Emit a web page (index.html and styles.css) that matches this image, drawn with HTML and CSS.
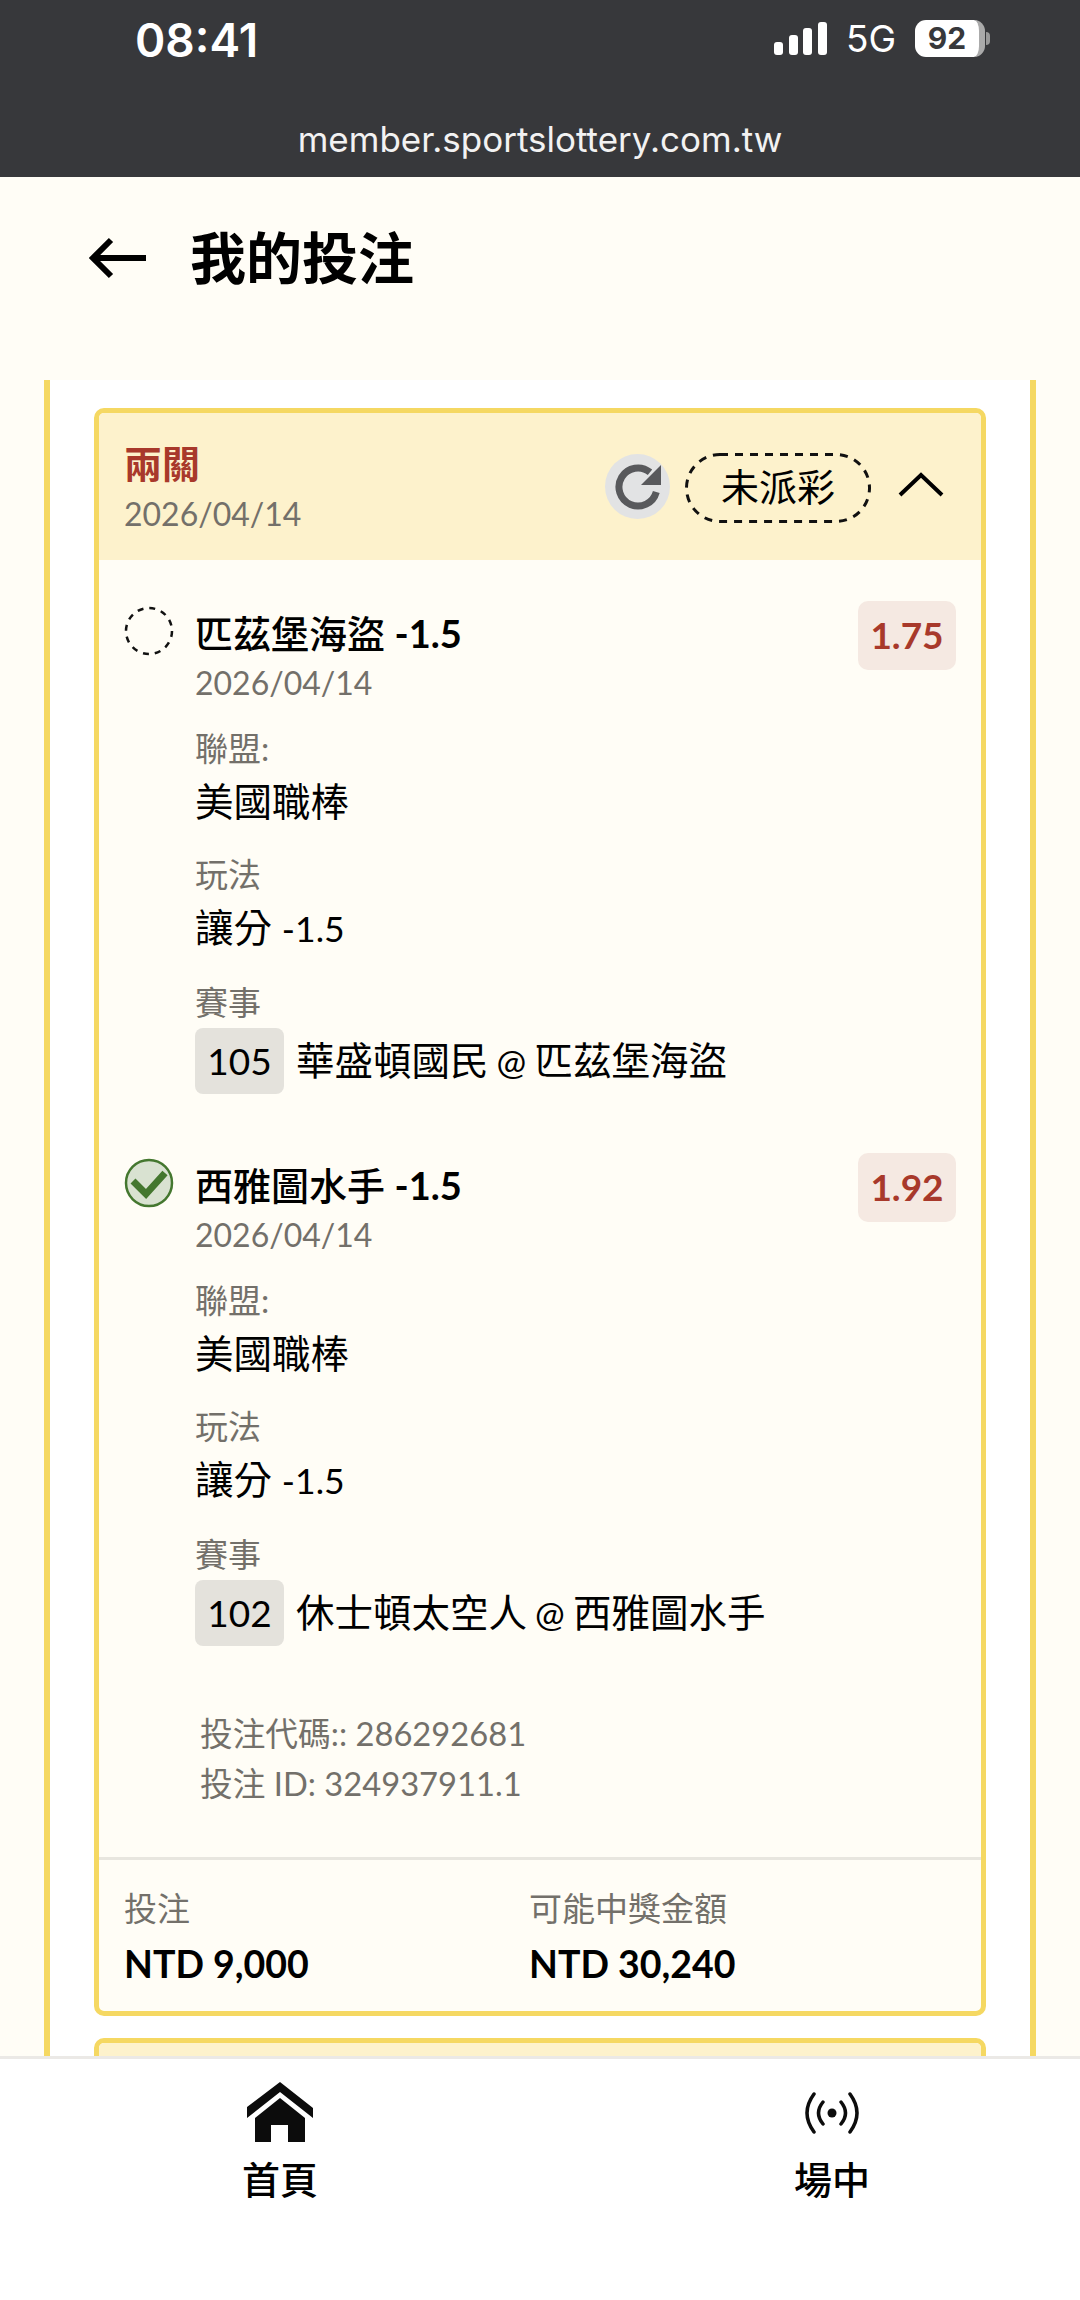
FILE: index.html
```html
<!DOCTYPE html>
<html lang="zh-Hant">
<head>
<meta charset="utf-8">
<title>我的投注</title>
<link rel="stylesheet" href="styles.css">
</head>
<body>
<div class="page">
  <div class="browser">
    <div class="status">
      <span class="time">08:41</span>
      <div class="status-right">
        <svg class="signal" width="53" height="33" viewBox="0 0 53 33"><rect x="0" y="20" width="9" height="13" rx="3"/><rect x="15" y="13" width="9" height="20" rx="3"/><rect x="29" y="6" width="9" height="27" rx="3"/><rect x="44" y="0" width="9" height="33" rx="3"/></svg>
        <span class="net">5G</span>
        <div class="battery"><span class="batt-num">92</span></div>
        <span class="batt-cap"></span>
      </div>
    </div>
    <div class="url">member.sportslottery.com.tw</div>
  </div>

  <header class="title-bar">
    <svg class="back" width="60" height="44" viewBox="0 0 60 44"><path d="M58 22H5M23 4 5 22l18 18" fill="none" stroke="#000" stroke-width="6"/></svg>
    <h1 class="title">我的投注</h1>
  </header>

  <main class="panel">
    <section class="card">
      <div class="card-head">
        <div>
          <div class="kind">兩關</div>
          <div class="head-date">2026/04/14</div>
        </div>
        <div class="head-actions">
          <span class="refresh">
            <svg width="48" height="48" viewBox="0 0 48 48"><path d="M36 9.3A19 19 0 1 0 42.3 29" fill="none" stroke="#58595c" stroke-width="7"/><path d="M47 2V22H27z" fill="#58595c"/></svg>
          </span>
          <span class="state">未派彩<svg class="state-line" width="186" height="70" viewBox="0 0 186 70"><rect x="1.5" y="1.5" width="183" height="67" rx="33.5" fill="none" stroke="#111" stroke-width="3" stroke-dasharray="8 7"/></svg></span>
          <svg class="chev" width="46" height="25" viewBox="0 0 46 25"><path d="M2 23 23 3l21 20" fill="none" stroke="#000" stroke-width="4"/></svg>
        </div>
      </div>

      <div class="card-body">
        <article class="leg">
          <svg class="mark" width="50" height="50" viewBox="0 0 50 50"><circle cx="25" cy="25" r="23" fill="none" stroke="#111" stroke-width="2.5" stroke-dasharray="6 6"/></svg>
          <div class="leg-main">
            <div class="leg-top">
              <div>
                <div class="leg-name">匹茲堡海盜 <b class="name-num">-1.5</b></div>
                <div class="leg-date">2026/04/14</div>
              </div>
              <span class="odds">1.75</span>
            </div>
            <div class="field"><div class="label">聯盟:</div><div class="value">美國職棒</div></div>
            <div class="field"><div class="label">玩法</div><div class="value">讓分 <span class="num">-1.5</span></div></div>
            <div class="field"><div class="label">賽事</div><div class="value match"><span class="code">105</span><span>華盛頓國民<span class="num at"> @ </span>匹茲堡海盜</span></div></div>
          </div>
        </article>

        <article class="leg">
          <svg class="mark" width="50" height="50" viewBox="0 0 50 50"><circle cx="25" cy="25" r="23" fill="#d9e2d1" stroke="#44772f" stroke-width="2.5"/><path d="M9 23l13 13 19-21" fill="none" stroke="#44772f" stroke-width="7"/></svg>
          <div class="leg-main">
            <div class="leg-top">
              <div>
                <div class="leg-name">西雅圖水手 <b class="name-num">-1.5</b></div>
                <div class="leg-date">2026/04/14</div>
              </div>
              <span class="odds">1.92</span>
            </div>
            <div class="field"><div class="label">聯盟:</div><div class="value">美國職棒</div></div>
            <div class="field"><div class="label">玩法</div><div class="value">讓分 <span class="num">-1.5</span></div></div>
            <div class="field"><div class="label">賽事</div><div class="value match"><span class="code">102</span><span>休士頓太空人<span class="num at"> @ </span>西雅圖水手</span></div></div>
          </div>
        </article>

        <div class="ids">
          <div>投注代碼:: 286292681</div>
          <div>投注 ID: 324937911.1</div>
        </div>
      </div>

      <div class="card-foot">
        <div class="foot-col"><div class="foot-label">投注</div><div class="foot-value">NTD 9,000</div></div>
        <div class="foot-col"><div class="foot-label">可能中獎金額</div><div class="foot-value">NTD 30,240</div></div>
      </div>
    </section>
    <section class="card card-next"><div class="card-head"></div></section>
  </main>

  <nav class="tabs">
    <div class="tab">
      <svg class="tab-icon" width="66" height="60" viewBox="0 0 66 60"><path d="M33 0 66 26V36L33 10 0 36V25z" fill="#0c0c0c"/><path d="M33 16 58 36V60H41V43H24V60H8V36z" fill="#0c0c0c"/></svg>
      <span>首頁</span>
    </div>
    <div class="tab">
      <svg class="tab-icon" width="68" height="60" viewBox="0 0 68 60"><circle cx="34" cy="31" r="4.5" fill="#0c0c0c"/><g fill="none" stroke="#0c0c0c" stroke-width="3.5" stroke-linecap="round"><path d="M25 20Q16 31 25 42M43 20Q52 31 43 42M16 12Q2 31 16 50M52 12Q66 31 52 50"/></g></svg>
      <span>場中</span>
    </div>
  </nav>
</div>
</body>
</html>
```

FILE: styles.css
```css
* { box-sizing: border-box; }
html, body { margin: 0; padding: 0; }
body {
  width: 1080px;
  height: 2300px;
  overflow: hidden;
  background: #fffdf6;
  color: #000;
  font-family: Lato, "Noto Sans CJK TC", sans-serif;
}
.page { position: relative; width: 1080px; height: 2300px; overflow: hidden; }

.browser { height: 177px; background: #37383b; color: #fff; display: flex; flex-direction: column; }
.status {
  height: 80px;
  padding: 0 90px 0 135px;
  display: flex;
  align-items: center;
  justify-content: space-between;
}
.time { font: 600 46px/1 Inter, "Liberation Sans", sans-serif; }
.status-right { display: flex; align-items: center; margin-bottom: 3px; }
.signal { fill: #fff; margin-right: 19px; }
.net { font: 400 37px/1 Inter, "Liberation Sans", sans-serif; margin-right: 19px; }
.battery {
  width: 70px;
  height: 37px;
  border-radius: 11px;
  background: #fff;
  color: #37383b;
  text-align: center;
  border-right: 6px solid #aaa;
}
.batt-num { font: 700 30px/37px Inter, "Liberation Sans", sans-serif; }
.batt-cap { width: 4px; height: 13px; margin-left: 1px; background: #999; border-radius: 0 4px 4px 0; }
.url {
  margin-top: 39px;
  text-align: center;
  font: 400 35px/40px Inter, "Liberation Sans", sans-serif;
  color: #f2f2f2;
}

.title-bar { height: 203px; padding: 0 0 42px 88px; display: flex; align-items: center; }
.back { margin-right: 42px; flex: none; }
.title { margin: 0; font-size: 56px; line-height: 70px; font-weight: 700; }

.panel {
  width: 992px;
  height: 1800px;
  margin-left: 44px;
  padding: 28px 44px 0;
  background: #fff;
  border: solid #f5d862;
  border-width: 0 6px;
}
.card {
  border: 5px solid #f5d862;
  border-radius: 10px;
  background: #fffdf6;
  overflow: hidden;
}
.card-next { margin-top: 22px; }
.card-head {
  height: 147px;
  padding: 0 37px 0 25px;
  background: #fdf2cc;
  display: flex;
  align-items: center;
  justify-content: space-between;
}
.card-next .card-head { height: 100px; }
.kind { color: #a8392b; font-size: 38px; line-height: 46px; font-weight: 700; }
.head-date { margin-top: 8px; color: #73706a; font-size: 32px; line-height: 40px; }
.head-actions { display: flex; align-items: center; }
.refresh {
  width: 65px;
  height: 65px;
  border-radius: 50%;
  background: #e2e3e4;
  display: flex;
  align-items: center;
  justify-content: center;
  margin-right: 15px;
}
.state {
  position: relative;
  width: 186px;
  height: 70px;
  font-size: 38px;
  line-height: 66px;
  text-align: center;
  margin-right: 27px;
  margin-top: 2px;
}
.state-line { position: absolute; left: 0; top: 0; }
.chev { margin-bottom: 5px; }

.card-body { padding: 42px 25px 0; }
.leg { display: flex; align-items: flex-start; margin-bottom: 60px; }
.mark { flex: none; width: 50px; height: 50px; margin-top: 4px; margin-right: 21px; }
.leg-main { flex: 1; min-width: 0; }
.leg-top { display: flex; justify-content: space-between; align-items: flex-start; min-height: 91px; }
.leg-name { font-size: 38px; line-height: 48px; font-weight: 500; margin-top: 7px; }
.name-num { font-weight: 700; }
.leg-date { font-size: 32px; line-height: 40px; color: #73706a; margin-top: 6px; }
.odds {
  width: 98px;
  height: 69px;
  margin-top: -1px;
  border-radius: 10px;
  background: #f5e9e2;
  color: #a8392b;
  font-size: 37px;
  font-weight: 700;
  line-height: 67px;
  text-align: center;
}
.field { margin-top: 28px; }
.leg-top + .field { margin-top: 25px; }
.label { font-size: 33px; line-height: 40px; color: #73706a; }
.value { font-size: 38.5px; line-height: 50px; margin-top: 8px; }
.num { font-size: 35.5px; }
.at { word-spacing: -1px; }
.match { display: flex; align-items: center; margin-top: 6px; }
.code {
  width: 89px;
  height: 66px;
  border-radius: 8px;
  background: #e4e2dc;
  font-size: 37px;
  line-height: 66px;
  text-align: center;
  margin-right: 12px;
}
.ids { margin-left: 76px; padding-top: 3px; font-size: 32.7px; line-height: 50px; color: #73706a; }

.card-foot {
  margin-top: 48px;
  border-top: 3px solid #e8e6df;
  padding: 25px 25px 22px;
  display: flex;
}
.foot-col { width: 405px; }
.foot-label { font-size: 33px; line-height: 46px; color: #73706a; }
.foot-value { font-size: 37.5px; line-height: 50px; font-weight: 700; margin-top: 8px; }

.tabs {
  position: absolute;
  left: 0;
  right: 0;
  bottom: 0;
  height: 244px;
  background: #fff;
  border-top: 3px solid #ebe9e6;
  display: flex;
  gap: 192px;
  padding: 23px 0 0 100px;
}
.tab {
  width: 360px;
  display: flex;
  flex-direction: column;
  align-items: center;
  font-size: 38px;
  line-height: 50px;
  font-weight: 500;
}
.tab-icon { margin-bottom: 12px; }
```
